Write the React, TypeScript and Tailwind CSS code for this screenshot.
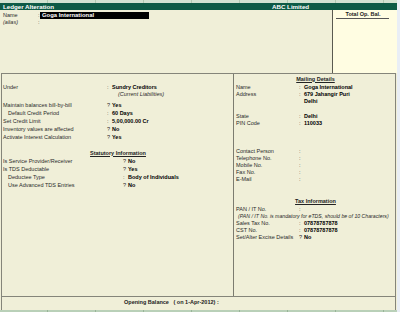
const font = { fontFamily: '"Liberation Sans", Arial, sans-serif' };

type RowProps = {
  label: string;
  value?: string;
  sep?: string;
  labelW: string;
  indent?: boolean;
  h?: string;
  mt?: string;
};

const Row = ({ label, value, sep = ":", labelW, indent, h = "h-[8px]", mt = "" }: RowProps) => (
  <div className={`flex items-center whitespace-nowrap ${h} ${mt}`}>
    <span className={`${labelW} shrink-0 text-[#2a2a2a] ${indent ? "pl-[5px]" : ""}`}>{label}</span>
    <span className="w-[5px] shrink-0 text-[#2a2a2a]">{sep}</span>
    {value && <span className="font-bold text-black">{value}</span>}
  </div>
);

const Strip = ({ h, bg, line }: { h: string; bg: string; line: string }) => (
  <div className={`flex ${h} ${bg}`}>
    {Array.from({ length: 9 }).map((_, i) => (
      <div key={i} className={`w-[48px] shrink-0 border-r ${line}`} />
    ))}
  </div>
);

export default function App() {
  return (
    <div className="w-[400px] h-[312px] overflow-hidden bg-[#e9eef5] text-[5.5px] leading-[7px]" style={font}>
      <div className="w-[397px] h-[312px] flex flex-col bg-[#f0efd8]">
        {/* top menu strip */}
        <Strip h="h-[3px]" bg="bg-[#d3e2d2]" line="border-[#b3c8b3]" />

        {/* title bar */}
        <div className="flex items-center h-[7px] bg-[#0d5a46] text-white font-bold text-[6.2px] leading-[7px]">
          <span className="w-[272px] pl-[3px]">Ledger Alteration</span>
          <span>ABC Limited</span>
        </div>

        {/* name + total op bal */}
        <div className="flex h-[63px]">
          <div className="flex-1 pt-[2px] pl-[3px]">
            <div className="flex items-center h-[7px]">
              <span className="w-[35px] text-[#2a2a2a]">Name</span>
              <span className="w-[2px] text-[#2a2a2a]">:</span>
              <span className="w-[109px] h-[7px] bg-black text-white font-bold text-[5.9px] leading-[7px] pl-[2px]">
                Goga International
              </span>
            </div>
            <div className="flex items-center h-[7px]">
              <span className="w-[35px] italic text-[#2a2a2a]">(alias)</span>
              <span className="text-[#2a2a2a]">:</span>
            </div>
          </div>
          <div className="w-[65px] bg-[#fffde2] border-l border-[#5a5a50] flex flex-col items-center pt-[1px]">
            <span className="h-[6px] leading-[6px] font-bold text-[#222] ml-[-4px]">Total Op. Bal.</span>
            <div className="w-[53px] h-[1px] bg-[#555] mt-[1px] ml-[-5px]" />
          </div>
        </div>

        {/* main box */}
        <div className="flex h-[223px] ml-[1px] w-[395px] border-t border-l border-r border-[#85857a]">
          {/* left */}
          <div className="w-[232px] border-r border-[#7c7c70] pl-[1px] pt-[9px]">
            <Row label="Under" value="Sundry Creditors" labelW="w-[104px]" />
            <div className="h-[7px] pl-[115px] italic text-[#2a2a2a]">(Current Liabilities)</div>
            <Row mt="mt-[3px]" label="Maintain balances bill-by-bill" sep="?" value="Yes" labelW="w-[104px]" />
            <Row label="Default Credit Period" value="60 Days" labelW="w-[104px]" indent />
            <Row label="Set Credit Limit" value="5,00,000.00 Cr" labelW="w-[104px]" />
            <Row label="Inventory values are affected" sep="?" value="No" labelW="w-[104px]" />
            <Row label="Activate Interest Calculation" sep="?" value="Yes" labelW="w-[104px]" />

            <div className="mt-[8px] h-[8px] flex items-center justify-center">
              <span className="font-bold underline text-[#222]">Statutory Information</span>
            </div>
            <Row label="Is Service Provider/Receiver" sep="?" value="No" labelW="w-[120px]" />
            <Row label="Is TDS Deductable" sep="?" value="Yes" labelW="w-[120px]" />
            <Row label="Deductee Type" value="Body of Individuals" labelW="w-[120px]" indent />
            <Row label="Use Advanced TDS Entries" sep="?" value="No" labelW="w-[120px]" indent />
          </div>

          {/* right */}
          <div className="flex-1 pl-[2px] pt-[1px]">
            <div className="h-[8px] flex items-center justify-center">
              <span className="font-bold underline text-[#222]">Mailing Details</span>
            </div>
            <Row mt="mt-[1px]" h="h-[7px]" label="Name" value="Goga International" labelW="w-[63px]" />
            <Row h="h-[7px]" label="Address" value="679 Jahangir Puri" labelW="w-[63px]" />
            <Row h="h-[7px]" label="" sep="" value="Delhi" labelW="w-[63px]" />
            <Row mt="mt-[7.5px]" h="h-[7px]" label="State" value="Delhi" labelW="w-[63px]" />
            <Row h="h-[7px]" label="PIN Code" value="110033" labelW="w-[63px]" />

            <Row mt="mt-[21px]" h="h-[7px]" label="Contact Person" labelW="w-[63px]" />
            <Row h="h-[7px]" label="Telephone No." labelW="w-[63px]" />
            <Row h="h-[7px]" label="Mobile No." labelW="w-[63px]" />
            <Row h="h-[7px]" label="Fax No." labelW="w-[63px]" />
            <Row h="h-[7px]" label="E-Mail" labelW="w-[63px]" />

            <div className="mt-[14.5px] h-[8px] flex items-center justify-center">
              <span className="font-bold underline text-[#222]">Tax Information</span>
            </div>
            <Row mt="mt-[0.5px]" h="h-[7px]" label="PAN / IT No." labelW="w-[63px]" />
            <div className="h-[7px] whitespace-nowrap italic text-[#2a2a2a] text-[5.2px] pl-[2px]">
              (PAN / IT No. is mandatory for eTDS, should be of 10 Characters)
            </div>
            <Row h="h-[7px]" label="Sales Tax No." value="07878787878" labelW="w-[63px]" />
            <Row h="h-[7px]" label="CST No." value="07878787878" labelW="w-[63px]" />
            <Row h="h-[7px]" label="Set/Alter Excise Details" sep="?" value="No" labelW="w-[63px]" />
          </div>
        </div>

        {/* opening balance */}
        <div className="h-[14px] ml-[1px] w-[395px] border-t border-l border-r border-[#85857a] pt-[2px] pl-[122px]">
          <span className="font-bold text-[#222] whitespace-pre">Opening Balance   ( on 1-Apr-2012) :</span>
        </div>

        {/* bottom strip */}
        <Strip h="h-[2px]" bg="bg-[#b9d0b8]" line="border-[#98b498]" />
      </div>
    </div>
  );
}
